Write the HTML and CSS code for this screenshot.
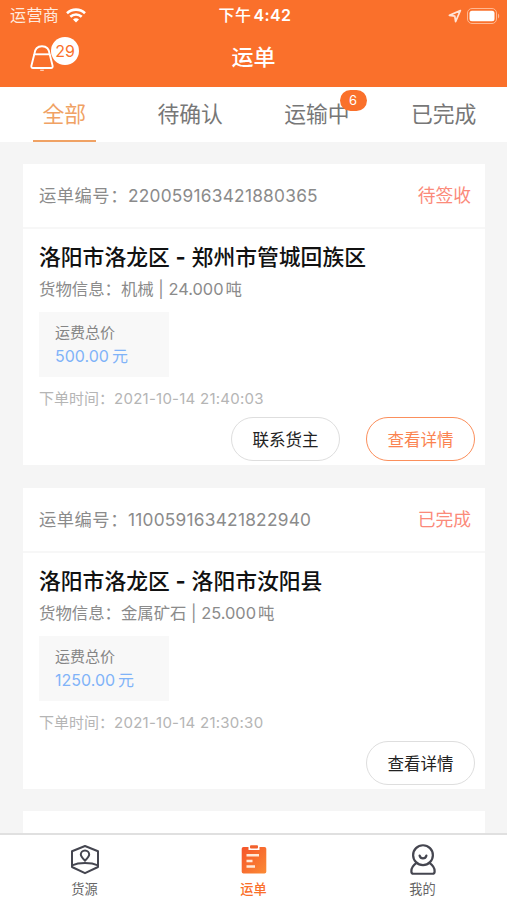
FILE: index.html
```
<!DOCTYPE html>
<html lang="zh-CN">
<head>
  <meta charset="UTF-8">
  <meta name="viewport" content="width=device-width, initial-scale=1.0">
  <title>运单</title>
  <link rel="stylesheet" href="styles.css">
</head>
<body>
  <header class="header">
    <div class="status-bar">
      <div class="carrier">
        <span>运营商</span>
        <svg class="wifi" width="20" height="15" viewBox="0 0 20 15" fill="none" stroke="#fff" stroke-width="2.6">
          <path d="M1 5.2C6 .4 14 .4 19 5.2"/>
          <path d="M4.3 8.8c3.3-3.1 8.1-3.1 11.4 0"/>
          <path d="M10 14.4l-3-3c1.6-1.5 4.4-1.5 6 0z" fill="#fff" stroke="none"/>
        </svg>
      </div>
      <div class="clock">下午<span>4:42</span></div>
      <div class="status-icons">
        <svg width="14" height="14" viewBox="0 0 14 14" fill="none" stroke="#ffe3d6" stroke-width="1.7" stroke-linejoin="round">
          <path d="M12.4 1.5L1.4 6.4l5.4.8.8 5.5z"/>
        </svg>
        <svg width="33" height="16" viewBox="0 0 33 16">
          <rect x=".5" y=".5" width="29" height="15" rx="4.5" fill="none" stroke="#ffb892"/>
          <rect x="2.5" y="2.8" width="25" height="10.4" rx="2.5" fill="#fff"/>
          <path d="M31 5.5c1.6.8 1.6 4.2 0 5z" fill="#ffb892"/>
        </svg>
      </div>
    </div>
    <div class="nav-bar">
      <div class="bell">
        <svg width="24" height="27" viewBox="0 0 24 27" fill="none" stroke="#fff" stroke-width="1.9" stroke-linejoin="round">
          <path d="M4.3 9.3C4.8 4 8 1.3 12 1.3s7.2 2.7 7.7 8l2.9 11.5c.3 1.5-.3 2.2-1.6 2.2H3c-1.3 0-1.9-.7-1.6-2.2z"/>
          <path d="M4.3 9.3h15.4"/>
          <path d="M10.2 25.3h3.6" stroke-width="1.2" stroke="#ffd3bd"/>
        </svg>
        <span class="bell-count">29</span>
      </div>
      <h1>运单</h1>
    </div>
  </header>

  <nav class="tabs">
    <div class="tab active"><span>全部</span></div>
    <div class="tab"><span>待确认</span></div>
    <div class="tab"><span>运输中<i class="tab-badge">6</i></span></div>
    <div class="tab"><span>已完成</span></div>
  </nav>

  <main class="list">
    <section class="card">
      <div class="card-head">
        <p><span>运单编号：</span>220059163421880365</p>
        <span class="state">待签收</span>
      </div>
      <div class="card-body">
        <h2>洛阳市洛龙区 <b>-</b> 郑州市管城回族区</h2>
        <p class="goods">货物信息：机械 | 24.000<span>吨</span></p>
        <div class="price">
          <p>运费总价</p>
          <strong>500.00<span>元</span></strong>
        </div>
        <p class="time">下单时间：<span>2021-10-14 21:40:03</span></p>
        <div class="actions">
          <button type="button">联系货主</button>
          <button type="button" class="primary">查看详情</button>
        </div>
      </div>
    </section>

    <section class="card">
      <div class="card-head">
        <p><span>运单编号：</span>110059163421822940</p>
        <span class="state">已完成</span>
      </div>
      <div class="card-body">
        <h2>洛阳市洛龙区 <b>-</b> 洛阳市汝阳县</h2>
        <p class="goods">货物信息：金属矿石 | 25.000<span>吨</span></p>
        <div class="price">
          <p>运费总价</p>
          <strong>1250.00<span>元</span></strong>
        </div>
        <p class="time">下单时间：<span>2021-10-14 21:30:30</span></p>
        <div class="actions">
          <button type="button">查看详情</button>
        </div>
      </div>
    </section>

    <section class="card"></section>
  </main>

  <footer class="tab-bar">
    <div class="tab-item">
      <svg width="30" height="30" viewBox="0 0 30 30" fill="none" stroke="#454650" stroke-width="2" stroke-linejoin="round">
        <path d="M15 1.5l13 5.2v15.8l-13 6.2-13-6.2V6.7z"/>
        <path d="M2 20.8c7-3 19-3 26 0"/>
        <path d="M15 16.2c-2.7-2.7-4.2-4.1-4.2-6.1a4.2 4.2 0 0 1 8.400 0c0 2-1.500 3.400-4.200 6.100z"/>
      </svg>
      <span>货源</span>
    </div>
    <div class="tab-item active">
      <svg width="30" height="30" viewBox="0 0 30 30">
        <defs>
          <linearGradient id="board" x1="0" y1="0" x2="1" y2="1">
            <stop offset="0" stop-color="#f5532a"/>
            <stop offset="1" stop-color="#fb8b35"/>
          </linearGradient>
        </defs>
        <path d="M4.500 2.500h5V5.500h11V2.500h5q1.800 0 1.800 1.800v22.900q0 1.800-1.800 1.800h-21q-1.800 0-1.800-1.800V4.300q0-1.800 1.800-1.800z" fill="url(#board)"/>
        <rect x="11" y=".8" width="8" height="3.200" rx="1" fill="#f2602c"/>
        <path d="M7.500 10.800h12.500M7.500 16.500h6M7.500 22h8.500" stroke="#ffe9d9" stroke-width="2.600"/>
      </svg>
      <span>运单</span>
    </div>
    <div class="tab-item">
      <svg width="30" height="32" viewBox="0 0 30 32" fill="none" stroke="#454650" stroke-width="2.300" stroke-linecap="round" stroke-linejoin="round">
        <circle cx="15" cy="11.500" r="10.200"/>
        <path d="M11.500 12c1 3.800 6 3.800 7 0"/>
        <path d="M8.300 19.500c-3.500 2.500-5.300 5.500-5.300 8.500 0 1.800.8 2.700 2.200 2.700h19.600c1.400 0 2.200-.9 2.200-2.700 0-3-1.800-6-5.300-8.500"/>
      </svg>
      <span>我的</span>
    </div>
  </footer>
</body>
</html>
```
FILE: styles.css
```
* {
  box-sizing: border-box;
}
body {
  font-family: Inter, "Noto Sans CJK SC", sans-serif;
  margin: 0;
  height: 900px;
  display: flex;
  flex-direction: column;
  overflow: hidden;
  background-color: #f5f5f5;
}
h1, h2, p {
  margin: 0;
}

/* header */
.header {
  flex: none;
  height: 87px;
  background-color: #fa702b;
  color: #fff;
}
.status-bar {
  display: grid;
  grid-template-columns: 1fr auto 1fr;
  align-items: center;
  height: 29px;
  padding: 1px 7px 0 10px;
  font-size: 16px;
  line-height: 29px;
}
.carrier {
  display: flex;
  align-items: center;
  gap: 7px;
  letter-spacing: 0.4px;
  color: #ffeadf;
}
.clock {
  font-size: 16px;
  font-weight: 500;
  letter-spacing: 0.4px;
}
.clock span {
  margin-left: 2px;
  font-weight: 600;
}
.status-icons {
  display: flex;
  align-items: center;
  justify-content: flex-end;
  gap: 5px;
}
.nav-bar {
  position: relative;
  height: 58px;
}
h1 {
  font-size: 22px;
  font-weight: 500;
  line-height: 57px;
  text-align: center;
}
.bell {
  position: absolute;
  left: 30px;
  top: 16px;
}
.bell-count {
  position: absolute;
  left: 21px;
  top: -8px;
  width: 28px;
  height: 28px;
  border-radius: 50%;
  background-color: #fff;
  color: #fa702b;
  font-size: 16px;
  line-height: 28px;
  text-align: center;
}

/* tabs */
.tabs {
  flex: none;
  display: grid;
  grid-template-columns: repeat(4, 1fr);
  height: 55px;
  background-color: #fff;
}
.tab {
  display: flex;
  justify-content: center;
  font-size: 21.8px;
  line-height: 54px;
  color: #777;
}
.tab span {
  position: relative;
  height: 55px;
}
.tab.active {
  padding-left: 2px;
  color: #f0a264;
}
.tab.active span {
  padding: 0 10px;
  border-bottom: 2px solid #f0a264;
}
.tab-badge {
  position: absolute;
  right: -17px;
  top: 3px;
  width: 27px;
  height: 21px;
  border-radius: 11px;
  background-color: #fa702b;
  color: #fff;
  font-size: 13px;
  font-style: normal;
  line-height: 21px;
  text-align: center;
}

/* waybill list */
.list {
  flex: 1;
  min-height: 0;
  overflow: hidden;
  padding: 22px 22px 0 23px;
}
.card {
  height: 301px;
  margin-bottom: 22.5px;
  background-color: #fff;
}
.card-head {
  display: flex;
  justify-content: space-between;
  height: 65px;
  padding: 0 14px 0 16px;
  border-bottom: 2px solid #f7f7f7;
  font-size: 17.3px;
  letter-spacing: 0.25px;
  line-height: 64px;
  color: #8b8b8b;
}
.card-head p span {
  letter-spacing: 0.5px;
}
.card-head .state {
  font-size: 17.8px;
  letter-spacing: 0;
  color: #fb8a7a;
}
.card-body {
  padding: 12px 10px 0 16px;
}
h2 {
  font-size: 21.8px;
  font-weight: 500;
  line-height: 32px;
  color: #111;
}
h2 b {
  font-weight: 700;
}
.goods {
  font-size: 16.4px;
  line-height: 32px;
  color: #8b8b8b;
}
.goods span {
  margin-left: 2px;
}
.price {
  width: 130px;
  height: 65px;
  margin-top: 7px;
  padding: 9px 0 0 16px;
  background-color: #f8f8f8;
  font-size: 15px;
  line-height: 24px;
  color: #858585;
}
.price strong {
  display: block;
  font-size: 16px;
  font-weight: 400;
  line-height: 23px;
  color: #80b3f8;
}
.price span {
  margin-left: 3px;
}
.time {
  margin-top: 10px;
  font-size: 15px;
  line-height: 24px;
  color: #b5b5b5;
}
.time span {
  letter-spacing: 0.25px;
}
.actions {
  display: flex;
  justify-content: flex-end;
  gap: 26px;
  margin-top: 6px;
}
button {
  width: 109px;
  height: 44px;
  padding: 0;
  border: 1px solid #dedede;
  border-radius: 22px;
  background-color: #fff;
  font-family: inherit;
  font-size: 16.5px;
  color: #222;
}
button.primary {
  border-color: #fb8f5c;
  color: #fb8350;
}

/* bottom bar */
.tab-bar {
  flex: none;
  display: grid;
  grid-template-columns: repeat(3, 1fr);
  height: 67px;
  border-top: 2px solid #e0e0e0;
  background-color: #fff;
}
.tab-item {
  display: flex;
  flex-direction: column;
  align-items: center;
  padding-top: 9px;
  font-size: 13.2px;
  line-height: 20px;
  color: #666;
}
.tab-item svg {
  height: 31px;
  margin-bottom: 4px;
}
.tab-item.active {
  color: #fa702b;
  font-weight: 500;
}
```
